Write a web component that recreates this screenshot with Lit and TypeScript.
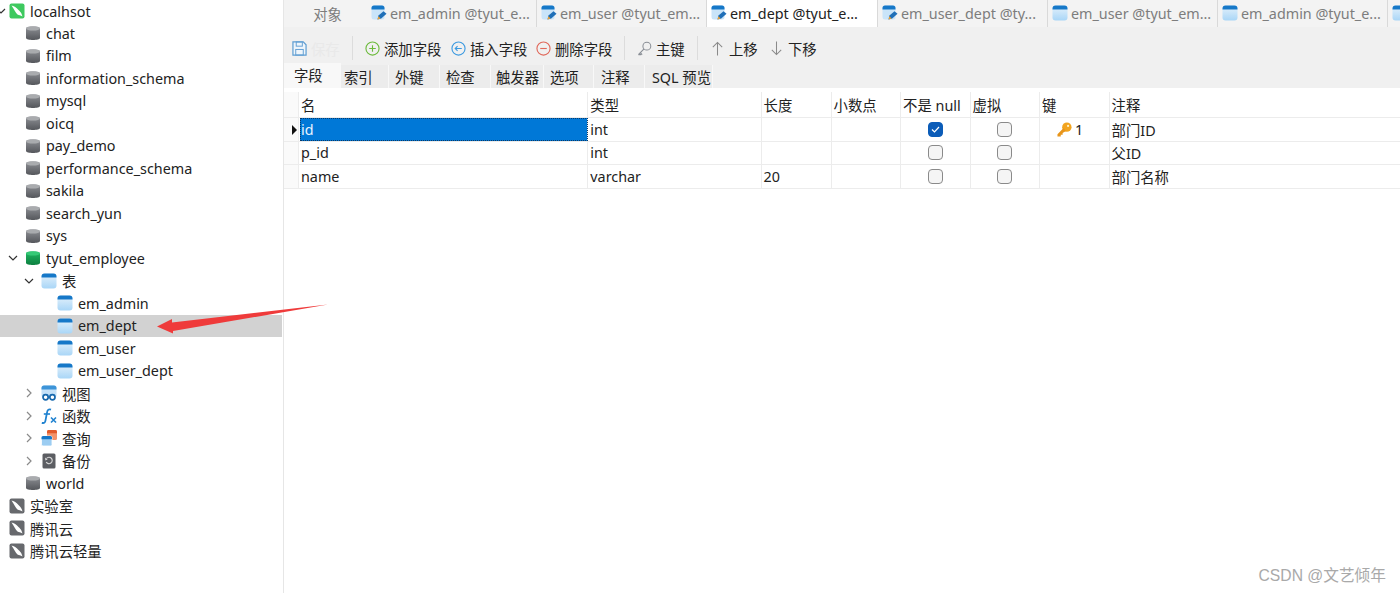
import { LitElement, html, css, svg } from "lit";
import { customElement } from "lit/decorators.js";

const cyl = (id: string, c1: string, c2: string, top: string) => html`<svg class="ic" viewBox="0 0 16 16"><defs><linearGradient id=${id} x1="0" x2="0" y1="0" y2="1"><stop offset="0" stop-color=${c1}/><stop offset="1" stop-color=${c2}/></linearGradient></defs><path d="M1 3.2C1 .8 15 .8 15 3.2V13C15 15.6 1 15.6 1 13Z" fill="url(#${id})"/><ellipse cx="8" cy="3.4" rx="7" ry="2.2" fill=${top}/></svg>`;
const dbGrey = () => cyl("gg", "#8f9196", "#55575c", "#a9abae");
const dbGreen = () => cyl("gn", "#22b763", "#0d8040", "#35c976");
const table = () => html`<svg class="ic" viewBox="0 0 16 16"><defs><linearGradient id="tb" x1="0" x2="0" y1="0" y2="1"><stop offset="0" stop-color="#e6f2fb"/><stop offset="1" stop-color="#a9d6f7"/></linearGradient></defs><rect x="0.5" y="0.5" width="15" height="15" rx="3" fill="url(#tb)"/><path d="M0.5 4.5V3.5A3 3 0 0 1 3.5 .5H12.5A3 3 0 0 1 15.5 3.5V4.5Z" fill="#1678c8"/></svg>`;
const tableEdit = () => html`<svg class="ic" viewBox="0 0 16 16"><rect x="0.5" y="0.5" width="13" height="14" rx="2.5" fill="#c9e4f9"/><path d="M0.5 4.5V3A2.5 2.5 0 0 1 3 .5H11A2.5 2.5 0 0 1 13.5 3V4.5Z" fill="#1678c8"/><path d="M6.5 14.5L7.5 10.5L12.5 6.2L15.5 8.8L10.2 13.5Z" fill="#1f6fb8"/><path d="M6.5 14.5L7.4 11.2L9.6 13.4Z" fill="#f0a030"/></svg>`;
const view = () => html`<svg class="ic" viewBox="0 0 16 16"><rect x="0.5" y="0.5" width="15" height="12" rx="2.5" fill="#c4e1f8"/><path d="M0.5 4.5V3A2.5 2.5 0 0 1 3 .5H13A2.5 2.5 0 0 1 15.5 3V4.5Z" fill="#3d94d8"/><circle cx="4.6" cy="12.3" r="2.6" fill="#fff" stroke="#1668ad" stroke-width="1.7"/><circle cx="11.4" cy="12.3" r="2.6" fill="#fff" stroke="#1668ad" stroke-width="1.7"/></svg>`;
const fx = () => html`<svg class="ic" viewBox="0 0 16 16"><path d="M10 1.6C7.4.6 6.4 2.4 6 4.6L4.4 12.8C4 14.8 3 15.4 .8 14.8" fill="none" stroke="#1f82d0" stroke-width="1.8"/><path d="M2.8 6H9" stroke="#1f82d0" stroke-width="1.6"/><path d="M10 9.5L15 14.5M15 9.5L10 14.5" stroke="#1f82d0" stroke-width="1.6"/></svg>`;
const query = () => html`<svg class="ic" viewBox="0 0 16 16"><rect x="6" y="0" width="10" height="10" rx="1.5" fill="#f3936a"/><path d="M6 3.2V1.5A1.5 1.5 0 0 1 7.5 0H14.5A1.5 1.5 0 0 1 16 1.5V3.2Z" fill="#e25a2b"/><rect x="0.5" y="6" width="10.5" height="10" rx="1.5" fill="#9ccdf2" stroke="#fff" stroke-width=".8"/><path d="M.5 9.2V7.5A1.5 1.5 0 0 1 2 6H9.5A1.5 1.5 0 0 1 11 7.5V9.2Z" fill="#1678c8"/></svg>`;
const backup = () => html`<svg class="ic" viewBox="0 0 16 16"><rect x="1.5" y="0.5" width="13" height="15" rx="1.5" fill="#5c5e63"/><path d="M5.5 5.5A3.2 3.2 0 1 1 5.2 9" fill="none" stroke="#d8d8d8" stroke-width="1.1"/><path d="M4 4.5L6.6 6.4L4.4 7.4Z" fill="#d8d8d8"/></svg>`;
const conn = (bg: string) => html`<svg class="ic" viewBox="0 0 16 16"><rect x="0.5" y="0.5" width="15" height="15" rx="2" fill=${bg}/><path d="M2.5 2.5C6 3 7.5 5 9.5 7C11 8.5 12.5 9.5 13.5 13.5C11.5 12 10 12.5 8.5 11.5C6.5 10 5.5 6.5 2.5 2.5Z" fill="#fff"/></svg>`;

const chev = (o: boolean) => html`<svg class="ch" viewBox="0 0 10 10"><path d=${o ? "M1 3L5 7L9 3" : "M3 1L7 5L3 9"} fill="none" stroke=${o ? "#333" : "#8a8a8a"} stroke-width="1.2"/></svg>`;

type Row = { t: string; ind: number; ic: any; ch?: "o" | "c"; sel?: boolean };
const rows: Row[] = [
  { t: "localhsot", ind: 1, ic: conn("#3ec95f"), ch: "o" },
  ...["chat", "film", "information_schema", "mysql", "oicq", "pay_demo", "performance_schema", "sakila", "search_yun", "sys"].map((t) => ({ t, ind: 2, ic: dbGrey() })),
  { t: "tyut_employee", ind: 2, ic: dbGreen(), ch: "o" },
  { t: "表", ind: 3, ic: table(), ch: "o" },
  { t: "em_admin", ind: 4, ic: table() },
  { t: "em_dept", ind: 4, ic: table(), sel: true },
  { t: "em_user", ind: 4, ic: table() },
  { t: "em_user_dept", ind: 4, ic: table() },
  { t: "视图", ind: 3, ic: view(), ch: "c" },
  { t: "函数", ind: 3, ic: fx(), ch: "c" },
  { t: "查询", ind: 3, ic: query(), ch: "c" },
  { t: "备份", ind: 3, ic: backup(), ch: "c" },
  { t: "world", ind: 2, ic: dbGrey() },
  { t: "实验室", ind: 1, ic: conn("#67696d") },
  { t: "腾讯云", ind: 1, ic: conn("#67696d") },
  { t: "腾讯云轻量", ind: 1, ic: conn("#67696d") },
];

const tabs = [
  { t: "em_admin @tyut_e...", e: true },
  { t: "em_user @tyut_em...", e: true },
  { t: "em_dept @tyut_e...", e: true, a: true },
  { t: "em_user_dept @ty...", e: true },
  { t: "em_user @tyut_em...", e: false },
  { t: "em_admin @tyut_e...", e: false },
];

const circ = (c: string, d: string) => html`<svg class="tic" viewBox="0 0 16 16"><circle cx="8" cy="8" r="7" fill="none" stroke=${c} stroke-width="1.2"/><path d=${d} fill="none" stroke=${c} stroke-width="1.2"/></svg>`;
const keyOutline = html`<svg class="tic" viewBox="0 0 16 16"><circle cx="10.5" cy="5.5" r="4.2" fill="none" stroke="#8a8f96" stroke-width="1.1"/><path d="M7.5 8.5L1.5 14.5M1.5 14.5H4.5M3.5 12.5L5.5 14.5" fill="none" stroke="#8a8f96" stroke-width="1.2"/></svg>`;
const keyGold = html`<svg class="key" viewBox="0 0 16 16"><circle cx="10.5" cy="5.5" r="5" fill="#f2a41f"/><circle cx="11.8" cy="4.2" r="1.2" fill="#fff3c8"/><path d="M7 6.5L.5 13V15.5H4V13.5H6V11.8L9.5 9.5" fill="#e8951a"/></svg>`;
const arrowUp = html`<svg class="tic" viewBox="0 0 16 16"><path d="M8 15.5V1.5M3 6.5L8 1.5L13 6.5" fill="none" stroke="#8a8a8a" stroke-width="1.1"/></svg>`;
const arrowDown = html`<svg class="tic" viewBox="0 0 16 16"><path d="M8 .5V14.5M3 9.5L8 14.5L13 9.5" fill="none" stroke="#8a8a8a" stroke-width="1.1"/></svg>`;
const save = html`<svg class="tic" viewBox="0 0 16 16"><path d="M1 1H12L15 4V15H1Z" fill="#eef5fb" stroke="#5f9dd2" stroke-width="1.3"/><rect x="4.5" y="1" width="6.5" height="4.5" fill="none" stroke="#5f9dd2"/><rect x="4" y="9" width="8" height="6" fill="none" stroke="#5f9dd2"/></svg>`;

const cols = ["名", "类型", "长度", "小数点", "不是 null", "虚拟", "键", "注释"];
const data = [
  { c: ["id", "int", "", ""], nn: true, key: true, note: "部门ID", sel: true },
  { c: ["p_id", "int", "", ""], nn: false, key: false, note: "父ID" },
  { c: ["name", "varchar", "20", ""], nn: false, key: false, note: "部门名称" },
];
const subtabs: [string, number, number, boolean?][] = [
  ["字段", 57, 10, true], ["索引", 48, 3], ["外键", 51, 6], ["检查", 51, 6],
  ["触发器", 53, 5], ["选项", 50, 6], ["注释", 51, 7], ["SQL 预览", 68, 7],
];

@customElement("app-root")
export class AppRoot extends LitElement {
  static styles = css`
    :host { display: block; position: relative; width: 1400px; height: 593px; overflow: hidden; background: #fff;
      font-family: "Noto Sans", "Noto Sans CJK SC", sans-serif; font-size: 14.35px; color: #222; }
    .app { display: flex; height: 100%; }
    .side { width: 284px; flex: none; box-sizing: border-box; border-right: 1px solid #e6e6e6; }
    .row { height: 22.5px; display: flex; align-items: center; position: relative; white-space: nowrap; margin-right: 1px; }
    .row:first-child { height: 22px; }
    .row.sel { background: #d2d2d2; }
    .l1 { padding-left: 9px; } .l2 { padding-left: 25px; } .l3 { padding-left: 41px; } .l4 { padding-left: 57px; }
    .ic { width: 16px; height: 16px; flex: none; margin-right: 5px; }
    .ch { width: 10px; height: 10px; position: absolute; top: 6px; }
    .l1 .ch { left: -4px; } .l2 .ch { left: 8px; } .l3 .ch { left: 24px; }
    .main { flex: 1; min-width: 0; display: flex; flex-direction: column; }
    .tabs { height: 27px; display: flex; background: #f3f3f3; flex: none; }
    .tab { width: 170px; flex: none; box-sizing: border-box; display: flex; align-items: center; padding: 0 0 1px 4px; border-right: 1px solid #d9d9d9; color: #7d7d7d; white-space: nowrap; overflow: hidden; }
    .tab .ic { margin-right: 3px; }
    .tab.obj { width: 83px; justify-content: center; padding-right: 0; border-right: none; }
    .tab.a { background: #fff; color: #222; width: 171px; }
    .tb { height: 36px; flex: none; background: #f0f0f0; display: flex; align-items: center; padding-left: 8px; padding-top: 6px; box-sizing: border-box; }
    .btn { display: flex; align-items: center; gap: 4px; white-space: nowrap; flex: none; }
    .tic { width: 15px; height: 15px; flex: none; }
    .sep { width: 1px; height: 24px; background: #dcdcdc; flex: none; margin-right: 12px; }
    .dim { color: #e9e9e9; }
    .st { height: 25px; flex: none; background: #f0f0f0; display: flex; }
    .stb { box-sizing: border-box; display: flex; align-items: center; background: #ececec; border-right: 1px solid #f8f8f8; margin-top: 2px; white-space: nowrap; }
    .stb.a { background: #f8f8f8; margin-top: 0; padding-bottom: 3px; }
    .grid { padding-top: 4px; flex: 1; }
    .gr { display: grid; grid-template-columns: 15px 289.3px 173.3px 70px 69.5px 69.5px 69.5px 69.5px 1fr; border-bottom: 1px solid #ececec; box-sizing: border-box; }
    .gr.h { height: 26.4px; }
    .gr.b { height: 23.4px; }
    .c { border-right: 1px solid #ececec; display: flex; align-items: center; padding-left: 2px; white-space: nowrap; position: relative; box-sizing: border-box; min-width: 0; }
    .c:last-child { border-right: none; }
    .c.g { padding: 0; background: #fafafa; justify-content: center; }
    .c.s { background: #0078d7; color: #e8f4ff; outline: 1px dotted #0d3a66; outline-offset: -1px; margin-left: 1px; padding-left: 1px; }
    .c.m { justify-content: center; padding: 0; }
    .c.kc { justify-content: flex-start; padding-left: 17px; }
    .tri { width: 0; height: 0; border-left: 5px solid #111; border-top: 5px solid transparent; border-bottom: 5px solid transparent; margin-left: 6px; }
    .cb { width: 13px; height: 13px; border: 1px solid #8a8a8a; border-radius: 4px; background: #f5f5f5; display: flex; }
    .cb.on { background: #0b5cb8; border-color: #0b5cb8; }
    .cb svg { width: 13px; height: 13px; }
    .key { width: 15px; height: 15px; margin-right: 3px; flex: none; }
    .overlay { position: absolute; left: 0; top: 0; width: 1400px; height: 593px; pointer-events: none; }
    .wm { position: absolute; right: 14px; bottom: 7px; color: #a9a9a9; font-family: "Liberation Sans", "Noto Sans CJK SC", sans-serif; font-size: 15.7px; }
  `;

  render() {
    return html`
      <div class="app">
        <div class="side">
          ${rows.map((r) => html`<div class="row l${r.ind} ${r.sel ? "sel" : ""}">${r.ch ? chev(r.ch === "o") : ""}${r.ic}<span>${r.t}</span></div>`)}
        </div>
        <div class="main">
          <div class="tabs">
            <div class="tab obj">对象</div>
            ${tabs.map((t) => html`<div class="tab ${t.a ? "a" : ""}">${t.e ? tableEdit() : table()}<span>${t.t}</span></div>`)}
            <div class="tab" style="border:none">${table()}</div>
          </div>
          <div class="tb">
            <div class="btn" style="width:60px">${save}<span class="dim">保存</span></div>
            <div class="sep"></div>
            <div class="btn" style="width:86px">${circ("#6cba3c", "M8 4.5V11.5M4.5 8H11.5")}<span>添加字段</span></div>
            <div class="btn" style="width:85px">${circ("#3c9ae0", "M11.5 8H4.5M7 5.5L4.5 8L7 10.5")}<span>插入字段</span></div>
            <div class="btn" style="width:88px">${circ("#e0685a", "M4.5 8H11.5")}<span>删除字段</span></div>
            <div class="sep"></div>
            <div class="btn" style="width:60px">${keyOutline}<span>主键</span></div>
            <div class="sep"></div>
            <div class="btn" style="width:59px">${arrowUp}<span>上移</span></div>
            <div class="btn">${arrowDown}<span>下移</span></div>
          </div>
          <div class="st">
            ${subtabs.map(([t, w, p, a]) => html`<div class="stb ${a ? "a" : ""}" style="width:${w}px;padding-left:${p}px">${t}</div>`)}
          </div>
          <div class="grid">
            <div class="gr h"><div class="c g"></div>${cols.map((c) => html`<div class="c">${c}</div>`)}</div>
            ${data.map((d) => html`<div class="gr b">
              <div class="c g">${d.sel ? html`<div class="tri"></div>` : ""}</div>
              <div class="c ${d.sel ? "s" : ""}">${d.c[0]}</div>
              <div class="c">${d.c[1]}</div>
              <div class="c">${d.c[2]}</div>
              <div class="c"></div>
              <div class="c m"><div class="cb ${d.nn ? "on" : ""}">${d.nn ? svg`<svg viewBox="0 0 13 13"><path d="M3 6.5L5.5 9L10 4" fill="none" stroke="#fff" stroke-width="1.2"/></svg>` : ""}</div></div>
              <div class="c m"><div class="cb"></div></div>
              <div class="c kc">${d.key ? html`${keyGold}1` : ""}</div>
              <div class="c">${d.note}</div>
            </div>`)}
          </div>
        </div>
      </div>
      <svg class="overlay" viewBox="0 0 1400 593"><path d="M157 326.5L172 319L172 322.5L328 304.5L173 331L173 333.5Z" fill="#ef3b3b"/></svg>
      <div class="wm">CSDN @文艺倾年</div>
    `;
  }
}
